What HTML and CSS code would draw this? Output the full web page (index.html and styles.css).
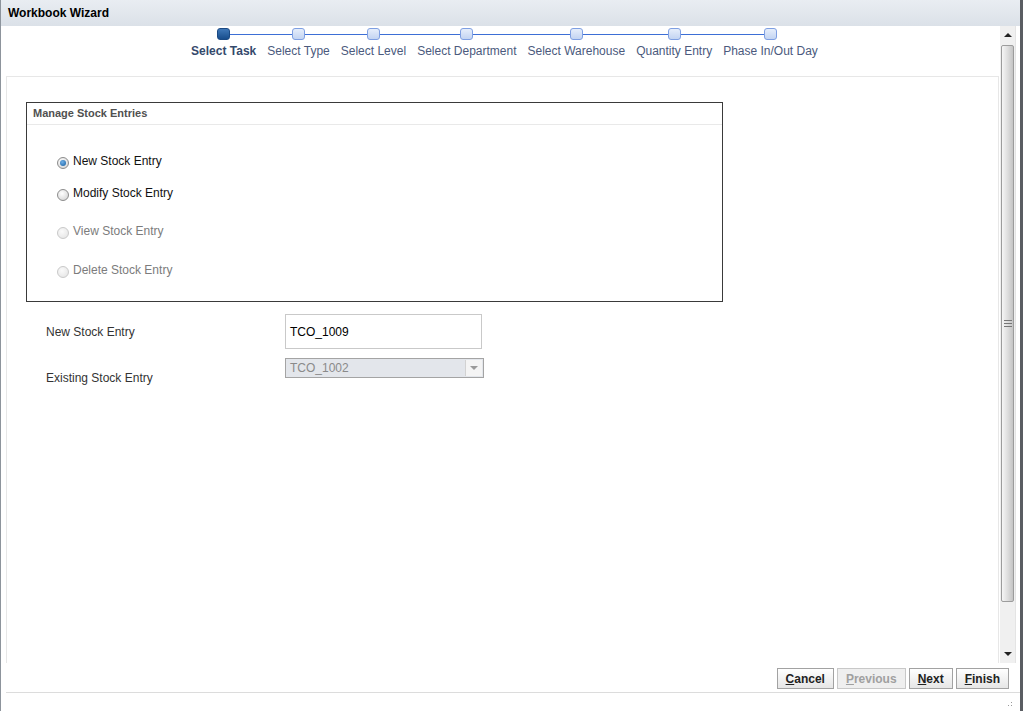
FILE: index.html
```html
<!DOCTYPE html>
<html>
<head>
  <title>Workbook Wizard</title>
  <link rel="stylesheet" href="styles.css">
</head>
<body>

  <div class="dialog">
    <div class="titlebar">Workbook Wizard</div>

    <div class="main">
      <div class="scroller">

        <!-- wizard train -->
        <div class="train-row">
          <div class="train">
            <div class="step current"><span class="node"></span><span class="step-label">Select Task</span></div>
            <div class="step"><span class="node"></span><span class="step-label">Select Type</span></div>
            <div class="step"><span class="node"></span><span class="step-label">Select Level</span></div>
            <div class="step"><span class="node"></span><span class="step-label">Select Department</span></div>
            <div class="step"><span class="node"></span><span class="step-label">Select Warehouse</span></div>
            <div class="step"><span class="node"></span><span class="step-label">Quantity Entry</span></div>
            <div class="step"><span class="node"></span><span class="step-label">Phase In/Out Day</span></div>
          </div>
        </div>

        <div class="panel">
          <div class="group">
            <div class="group-head">Manage Stock Entries</div>
            <div class="opt opt1"><span class="radio checked"></span><span>New Stock Entry</span></div>
            <div class="opt opt2"><span class="radio"></span><span>Modify Stock Entry</span></div>
            <div class="opt opt3 disabled"><span class="radio"></span><span>View Stock Entry</span></div>
            <div class="opt opt4 disabled"><span class="radio"></span><span>Delete Stock Entry</span></div>
          </div>

          <div class="form">
            <div class="field-label">New Stock Entry</div>
            <div><div class="text-input">TCO_1009</div></div>
            <div class="field-label low">Existing Stock Entry</div>
            <div>
              <div class="select">
                <span>TCO_1002</span>
                <span class="select-btn"><span class="tri-down grey"></span></span>
              </div>
            </div>
          </div>
        </div>
      </div>

      <!-- scrollbar -->
      <div class="vscroll">
        <div class="sb-btn"><span class="tri-up"></span></div>
        <div class="sb-thumb"><span class="grip"></span></div>
        <div class="sb-track"></div>
        <div class="sb-btn"><span class="tri-down"></span></div>
      </div>
    </div>

    <div class="buttonbar">
      <button class="btn"><u>C</u>ancel</button>
      <button class="btn" disabled><u>P</u>revious</button>
      <button class="btn"><u>N</u>ext</button>
      <button class="btn"><u>F</u>inish</button>
    </div>

    <div class="footer"><span class="resize-grip"></span></div>
  </div>

</body>
</html>
```

FILE: styles.css
```css
html, body    { margin: 0; padding: 0; }
body          { font-family: "Liberation Sans", Arial, sans-serif; font-size: 12px; color: #111; width: 1023px; height: 711px; overflow: hidden; background: #fff; }

.dialog       { display: flex; flex-direction: column; height: 711px; box-sizing: border-box;
                border-left: 1px solid #8d949c; border-right: 3px solid #5a5d62; background: #fff; }

.titlebar     { flex: none; height: 26px; display: flex; align-items: center; padding-left: 7px;
                background: linear-gradient(#e9edf2, #dbe1e8); font-weight: bold; color: #000; }

.main         { flex: none; height: 637px; display: flex; }
.scroller     { flex: 1; display: flex; flex-direction: column; padding-left: 5px; padding-right: 1px; }

/* train */
.train-row    { flex: none; height: 50px; display: flex; justify-content: center; padding-left: 4px; }
.train        { position: relative; display: flex; gap: 11px; align-items: flex-start; }
.train::before {
  content: ""; position: absolute; top: 8px; left: 33px; right: 47px;
  height: 1px; background: #3d6fd6;
}
.step         { position: relative; display: flex; flex-direction: column; align-items: center; }
.node         { width: 11px; height: 10px; margin-top: 2px; border: 1px solid #7e9fe2; border-radius: 3px;
                background: linear-gradient(#e6eefb, #c3d4f2); }
.step.current .node { border-color: #1b4a84; background: linear-gradient(#3f78b8, #174d8c); }
.step-label   { margin-top: 4px; line-height: 15px; color: #4b5a7d; white-space: nowrap; }
.step.current .step-label { font-weight: bold; color: #34496c; }

/* content panel */
.panel        { flex: 1; border: 1px solid #e7e7e7; border-bottom: none; padding: 25px 0 0 19px; }

.group        { width: 697px; height: 200px; box-sizing: border-box; border: 1px solid #3a3a3a; }
.group-head   { height: 21px; line-height: 21px; padding-left: 6px; border-bottom: 1px solid #e9e9e9;
                font-size: 11px; font-weight: bold; color: #505050; }

.opt          { display: flex; align-items: flex-start; gap: 4px; height: 16px; line-height: 16px; padding-left: 30px; }
.opt1         { margin-top: 28px; }
.opt2         { margin-top: 16px; }
.opt3         { margin-top: 22px; }
.opt4         { margin-top: 23px; }
.opt.disabled { color: #7c7c7c; }

.radio        { position: relative; flex: none; width: 10px; height: 10px; margin-top: 4px; border-radius: 50%;
                border: 1px solid #8c8c8c; background: radial-gradient(circle at 40% 35%, #fff, #cfcfcf); }
.radio.checked::after {
  content: ""; position: absolute; left: 2px; top: 2px; width: 6px; height: 6px; border-radius: 50%;
  background: radial-gradient(circle at 40% 35%, #6fb0e8, #165d9e);
}
.opt.disabled .radio { border-color: #c9c9c9; background: radial-gradient(circle at 40% 35%, #fafafa, #e2e2e2); }

/* form */
.form         { display: grid; grid-template-columns: 239px auto; row-gap: 9px; margin-top: 12px; padding-left: 20px; }
.field-label  { align-self: center; color: #333; }
.field-label.low { align-self: start; padding-top: 13px; }
.text-input   { width: 197px; height: 35px; box-sizing: border-box; border: 1px solid #c9c9c9; padding-left: 4px;
                display: flex; align-items: center; color: #000; }
.select       { width: 199px; height: 20px; box-sizing: border-box; border: 1px solid #a4a4a4; background: #e3e6eb;
                display: flex; align-items: center; justify-content: space-between; padding-left: 4px; color: #8a8a8a; }
.select-btn   { width: 16px; height: 16px; margin-right: 1px; background: #f4f4f4; border-left: 1px solid #d2d2d2;
                display: flex; align-items: center; justify-content: center; }

.tri-down     { width: 0; height: 0; border-left: 4px solid transparent; border-right: 4px solid transparent; border-top: 4px solid #222; }
.tri-down.grey { border-top-color: #9a9a9a; }
.tri-up       { width: 0; height: 0; border-left: 4px solid transparent; border-right: 4px solid transparent; border-bottom: 4px solid #222; }

/* scrollbar */
.vscroll      { flex: none; width: 16px; margin-right: 4px; display: flex; flex-direction: column; background: #f0f0f0;
                border-right: 1px solid #e4e4e4; box-sizing: border-box; }
.sb-btn       { flex: none; height: 18px; display: flex; align-items: center; justify-content: center; }
.sb-thumb     { flex: none; height: 555px; margin: 1px 1px 0; border: 1px solid #9c9c9c; border-radius: 2px;
                background: linear-gradient(90deg, #f6f6f6, #dcdcdc 55%, #c4c4c4); display: flex; align-items: center; justify-content: center; }
.grip         { width: 8px; height: 7px; border-top: 1px solid #777; border-bottom: 1px solid #777;
                background: linear-gradient(#777, #777) center / 100% 1px no-repeat; box-sizing: border-box; }
.sb-track     { flex: 1; }

/* buttons */
.buttonbar    { flex: none; height: 30px; box-sizing: border-box; display: flex; justify-content: flex-end; align-items: flex-start;
                gap: 3px; padding: 5px 11px 0 0; margin-left: 5px; border-bottom: 1px solid #dcdcdc; }
.btn          { height: 21px; padding: 0 8px; border: 1px solid #a2a2a2; border-radius: 0; background: linear-gradient(#ffffff, #e6e6e6);
                font-family: "Liberation Sans", Arial, sans-serif; font-size: 12px; font-weight: bold; color: #222; cursor: pointer; }
.btn[disabled] { color: #a0a0a0; border-color: #c8c8c8; background: #efefef; cursor: default; }

.footer       { flex: 1; display: flex; justify-content: flex-end; align-items: flex-end; padding: 0 6px 3px 0; }
.resize-grip  { width: 10px; height: 10px;
                background: radial-gradient(circle, #9a9a9a 0.8px, transparent 1px) 0 0 / 3px 3px;
                clip-path: polygon(100% 0, 100% 100%, 0 100%); }
```
